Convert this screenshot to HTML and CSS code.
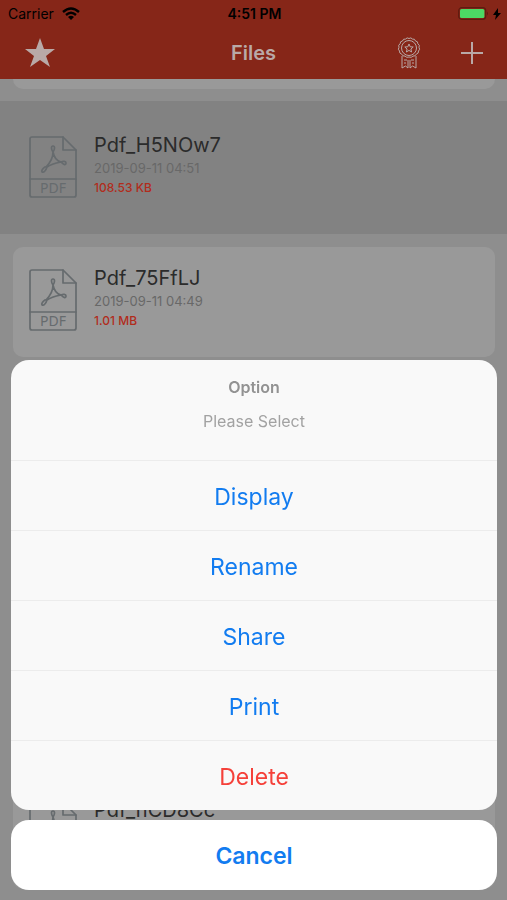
FILE: index.html
```html
<!DOCTYPE html>
<html lang="en">
<head>
    <meta charset="UTF-8">
    <meta name="viewport" content="width=device-width, initial-scale=1.0">
    <title>Files</title>
    <link rel="stylesheet" href="styles.css">
</head>
<body>
    <!-- Shared file icon -->
    <svg class="sprite" aria-hidden="true">
        <symbol id="pdfIcon" viewBox="0 0 48 62">
            <g fill="none" stroke="currentColor" stroke-width="1.700" stroke-linejoin="round" stroke-linecap="round">
                <path d="M3 1h31l13 13v45q0 2-2 2H3q-2 0-2-2V3q0-2 2-2z"/>
                <path d="M34 1v13h13M1 43h46"/>
                <path d="M24 16c-2-3-2-6 0-6s2 3 0 6zM24 16c0 6-3 11-7 15M24 16c1 5 4 9 8 10M16 31c-2 1-4 4-3 5 2 1 4-2 5-5 4-3 9-4 14-5M32 26c2-1 5-1 5 1 0 3-3 1-5-1z"/>
            </g>
            <text class="pdf-label" x="24" y="57" text-anchor="middle">PDF</text>
        </symbol>
    </svg>

    <div class="app">
        <header class="header">
            <div class="status-bar">
                <div class="carrier">
                    <span>Carrier</span>
                    <svg width="18" height="13" viewBox="0 0 18 13" fill="none" stroke="#000" stroke-width="2.4">
                        <path d="M1 5q8-7 16 0M4 8q5-4.400 10 0"/>
                        <path d="M9 13L6 10q3-2.400 6 0z" fill="#000" stroke="none"/>
                    </svg>
                </div>
                <div class="time">4:51 PM</div>
                <div class="battery">
                    <svg width="31" height="13" viewBox="0 0 31 13">
                        <rect x=".7" y=".7" width="27" height="11.600" rx="3" fill="none" stroke="#5c1c10" stroke-width="1.200"/>
                        <rect x="2" y="2" width="24.400" height="9" rx="1.500" fill="#4cd964"/>
                        <path d="M29 4.500q2 2 0 4z" fill="#5c1c10"/>
                    </svg>
                    <svg width="8" height="12" viewBox="0 0 8 12"><path d="M5 0L0 7h3L2 12 8 5H5z"/></svg>
                </div>
            </div>
            <nav class="nav-bar">
                <button class="nav-button" aria-label="Favorites">
                    <svg width="32" height="30" viewBox="0 0 32 30" fill="currentColor">
                        <path d="M16 0l4 11h11l-9 7 4 11-10-7-10 7 4-11-9-7h11z"/>
                    </svg>
                </button>
                <h1>Files</h1>
                <div class="nav-actions">
                    <button class="nav-button" aria-label="Awards">
                        <svg width="24" height="32" viewBox="0 0 24 32" fill="none" stroke="currentColor">
                            <path d="M12 1.500q2-1.500 3.500.6 2.400-.6 3 1.900 2.600.2 2.400 2.800 2.300 1.200 1.100 3.500 1.500 2-.5 3.700.3 2.600-2.200 3.100-.8 2.400-3.300 2-1.600 2-4 .9-2.400 1.100-4-.9-2.500.4-3.300-2-2.500-.5-2.200-3.100-2-1.700-.5-3.700-1.200-2.300 1.100-3.500-.2-2.600 2.400-2.800.6-2.500 3-1.900Q10 0 12 1.500z"/>
                            <circle cx="12" cy="11" r="7.500"/>
                            <path d="M12 7l1.200 2.800 3 .2-2.300 2 .7 3-2.600-1.600L9.400 15l.7-3-2.300-2 3-.2z"/>
                            <path d="M5 19v12l3.500-2 2.500 2v-8M19 19v12l-3.500-2-2.500 2v-8M7 23h3M14 23h3M7 26h2M15 26h2"/>
                        </svg>
                    </button>
                    <button class="nav-button" aria-label="Add file">
                        <svg width="22" height="22" viewBox="0 0 22 22" stroke="currentColor" stroke-width="2">
                            <path d="M11 0v22M0 11h22"/>
                        </svg>
                    </button>
                </div>
            </nav>
        </header>

        <main class="content">
            <ul class="file-list">
                <li class="file-row"><div class="file-card"></div></li>
                <li class="file-row selected">
                    <div class="file-card">
                        <svg class="file-icon"><use href="#pdfIcon"/></svg>
                        <div class="file-info">
                            <h2>Pdf_H5NOw7</h2>
                            <p class="date">2019-09-11 04:51</p>
                            <p class="size">108.53 KB</p>
                        </div>
                    </div>
                </li>
                <li class="file-row">
                    <div class="file-card">
                        <svg class="file-icon"><use href="#pdfIcon"/></svg>
                        <div class="file-info">
                            <h2>Pdf_75FfLJ</h2>
                            <p class="date">2019-09-11 04:49</p>
                            <p class="size">1.01 MB</p>
                        </div>
                    </div>
                </li>
                <li class="file-row"><div class="file-card"></div></li>
                <li class="file-row"><div class="file-card"></div></li>
                <li class="file-row"><div class="file-card"></div></li>
                <li class="file-row">
                    <div class="file-card">
                        <svg class="file-icon"><use href="#pdfIcon"/></svg>
                        <div class="file-info">
                            <h2>Pdf_nCD8Cc</h2>
                        </div>
                    </div>
                </li>
            </ul>
        </main>
    </div>

    <div class="overlay">
        <div class="action-sheet" role="dialog" aria-labelledby="sheetTitle">
            <div class="sheet-group">
                <div class="sheet-header">
                    <h2 id="sheetTitle">Option</h2>
                    <p>Please Select</p>
                </div>
                <button class="sheet-button">Display</button>
                <button class="sheet-button">Rename</button>
                <button class="sheet-button">Share</button>
                <button class="sheet-button">Print</button>
                <button class="sheet-button delete">Delete</button>
            </div>
            <button class="sheet-button cancel">Cancel</button>
        </div>
    </div>
</body>
</html>
```
FILE: styles.css
```css
* {
    box-sizing: border-box;
}
body {
    margin: 0;
    font-family: Inter, "Liberation Sans", sans-serif;
    background-color: #8e8e8e;
}
h1, h2, p, ul {
    margin: 0;
    padding: 0;
}
button {
    font-family: inherit;
    border: none;
    cursor: pointer;
}
svg {
    display: block;
}
.sprite {
    display: none;
}
.app {
    height: 100vh;
    display: flex;
    flex-direction: column;
    overflow: hidden;
}

/* Header */
.header {
    background-color: #862618;
    color: #b9a9a7;
}
.status-bar {
    display: grid;
    grid-template-columns: 1fr auto 1fr;
    align-items: center;
    height: 27px;
    padding: 0 6px 0 8px;
    color: #000;
    font-size: 14px;
}
.carrier, .battery {
    display: flex;
    align-items: center;
    gap: 8px;
}
.battery {
    justify-content: flex-end;
    gap: 4px;
}
.time {
    font-weight: 600;
}
.nav-bar {
    display: grid;
    grid-template-columns: 1fr auto 1fr;
    align-items: center;
    height: 52px;
    padding: 0 24px;
}
.nav-bar h1 {
    font-size: 20px;
    font-weight: 600;
}
.nav-button {
    padding: 0;
    background: none;
    color: inherit;
    justify-self: start;
}
.nav-actions {
    display: flex;
    align-items: center;
    justify-content: flex-end;
    gap: 40px;
}

/* File list */
.content {
    flex: 1;
    overflow: hidden;
}
.file-list {
    list-style: none;
    /* scrolled down by part of a row */
    margin-top: -111px;
}
.file-row {
    height: 133px;
    padding: 13px 12px 10px 13px;
}
.file-row.selected {
    background-color: #828282;
}
.file-card {
    display: flex;
    gap: 17px;
    height: 110px;
    padding: 18px 16px;
    border-radius: 10px;
    background-color: #999;
}
.file-row:first-child .file-card {
    height: 108px;
}
.selected .file-card {
    background: none;
}
.file-icon {
    width: 48px;
    height: 70px;
    color: #666b6e;
}
.pdf-label {
    font-family: "Noto Sans", sans-serif;
    font-size: 14px;
    fill: #666b6e;
}
.file-info h2 {
    color: #2b2b2b;
    font-size: 20px;
    font-weight: 400;
    line-height: 26px;
}
.file-info p {
    font-size: 12px;
    line-height: 20px;
}
.file-info .date {
    color: #686868;
    font-size: 13px;
}
.file-info .size {
    color: #b12c1c;
    font-weight: 500;
}

/* Action sheet */
.overlay {
    position: fixed;
    inset: 0;
    display: flex;
    align-items: flex-end;
    padding: 10px 10px 10px 11px;
}
.action-sheet {
    flex: 1;
    display: flex;
    flex-direction: column;
    gap: 10px;
}
.sheet-group {
    border-radius: 18px;
    background-color: #f9f9f9;
    overflow: hidden;
}
.sheet-header {
    height: 100px;
    padding: 16px;
    text-align: center;
    font-size: 16px;
    line-height: 22px;
    color: #a2a2a2;
}
.sheet-header h2 {
    margin-bottom: 12px;
    font-size: 16px;
    font-weight: 600;
    color: #929292;
}
.sheet-button {
    display: block;
    width: 100%;
    height: 70px;
    padding: 2px 0 0;
    border-top: 1px solid #ececec;
    background: none;
    color: #127cf0;
    font-size: 23px;
}
.sheet-button.delete {
    color: #f5413a;
}
.sheet-button.cancel {
    border: none;
    border-radius: 18px;
    background-color: #fff;
    font-weight: 600;
}
```
